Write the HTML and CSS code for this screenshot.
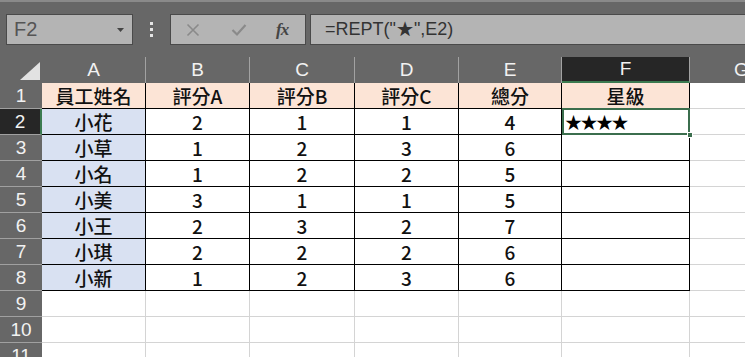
FILE: index.html
```html
<!DOCTYPE html>
<html lang="zh-Hant">
<head>
<meta charset="utf-8">
<title>Excel REPT</title>
<link rel="stylesheet" href="styles.css">
</head>
<body>
<div class="toolbar">
  <div class="namebox">
    <span class="nb-text">F2</span>
    <svg class="nb-arrow" width="7" height="4" viewBox="0 0 7 4"><polygon points="0,0 7,0 3.5,4" fill="#444"/></svg>
  </div>
  <div class="dots"><span></span><span></span><span></span></div>
  <div class="fbtns">
    <svg class="ico" width="14" height="14" viewBox="0 0 14 14"><path d="M1.5 1.5 L12.5 12.5 M12.5 1.5 L1.5 12.5" stroke="#8a8a8a" stroke-width="1.6" fill="none"/></svg>
    <svg class="ico" width="16" height="14" viewBox="0 0 16 14"><path d="M1.5 7 L6 11.5 L14.5 2" stroke="#8a8a8a" stroke-width="2.2" fill="none"/></svg>
    <span class="fx">fx</span>
  </div>
  <div class="finput">=REPT("★",E2)</div>
</div>
<div class="sheet">
  <div class="corner"><svg width="20" height="18" viewBox="0 0 20 18"><polygon points="0,18 20,0 20,18" fill="#e2e2e2"/></svg></div>
  <div class="ch">A</div><div class="ch">B</div><div class="ch">C</div><div class="ch">D</div><div class="ch">E</div><div class="ch ch-sel">F</div><div class="ch ch-last">G</div>

  <div class="rh">1</div>
  <div class="c t hd">員工姓名</div><div class="c t hd">評分A</div><div class="c t hd">評分B</div><div class="c t hd">評分C</div><div class="c t hd">總分</div><div class="c t hd">星級</div><div class="c"></div>

  <div class="rh rh-sel">2</div>
  <div class="c t nm">小花</div><div class="c t">2</div><div class="c t">1</div><div class="c t">1</div><div class="c t">4</div><div class="c t stars sel">★★★★<span class="handle"></span></div><div class="c"></div>

  <div class="rh">3</div>
  <div class="c t nm">小草</div><div class="c t">1</div><div class="c t">2</div><div class="c t">3</div><div class="c t">6</div><div class="c t"></div><div class="c"></div>

  <div class="rh">4</div>
  <div class="c t nm">小名</div><div class="c t">1</div><div class="c t">2</div><div class="c t">2</div><div class="c t">5</div><div class="c t"></div><div class="c"></div>

  <div class="rh">5</div>
  <div class="c t nm">小美</div><div class="c t">3</div><div class="c t">1</div><div class="c t">1</div><div class="c t">5</div><div class="c t"></div><div class="c"></div>

  <div class="rh">6</div>
  <div class="c t nm">小王</div><div class="c t">2</div><div class="c t">3</div><div class="c t">2</div><div class="c t">7</div><div class="c t"></div><div class="c"></div>

  <div class="rh">7</div>
  <div class="c t nm">小琪</div><div class="c t">2</div><div class="c t">2</div><div class="c t">2</div><div class="c t">6</div><div class="c t"></div><div class="c"></div>

  <div class="rh">8</div>
  <div class="c t nm">小新</div><div class="c t">1</div><div class="c t">2</div><div class="c t">3</div><div class="c t">6</div><div class="c t"></div><div class="c"></div>

  <div class="rh">9</div>
  <div class="c"></div><div class="c"></div><div class="c"></div><div class="c"></div><div class="c"></div><div class="c"></div><div class="c"></div>

  <div class="rh">10</div>
  <div class="c"></div><div class="c"></div><div class="c"></div><div class="c"></div><div class="c"></div><div class="c"></div><div class="c"></div>

  <div class="rh">11</div>
  <div class="c"></div><div class="c"></div><div class="c"></div><div class="c"></div><div class="c"></div><div class="c"></div><div class="c"></div>
</div>
</body>
</html>
```
FILE: styles.css
```css
* { box-sizing: border-box; }
html, body {
  margin: 0;
  padding: 0;
  width: 745px;
  height: 357px;
  overflow: hidden;
  background: #676767;
  font-family: "Liberation Sans", Arial, sans-serif;
}
.toolbar {
  height: 57px;
  border-top: 2px solid #8a8a8a;
  padding: 12px 0 0 6px;
  display: flex;
  align-items: flex-start;
}
.namebox {
  width: 127px;
  height: 31px;
  background: #b4b4b4;
  border: 1px solid #4a4a4a;
  display: flex;
  align-items: center;
  justify-content: space-between;
  padding: 0 8px 0 7px;
}
.nb-text {
  font-size: 20px;
  color: #555;
}
.nb-arrow { margin-top: 1px; }
.dots {
  width: 37px;
  height: 31px;
  display: flex;
  flex-direction: column;
  align-items: center;
  justify-content: center;
  gap: 3px;
}
.dots span {
  width: 3px;
  height: 3px;
  background: #e4e4e4;
}
.fbtns {
  width: 136px;
  height: 31px;
  background: #b4b4b4;
  border: 1px solid #4a4a4a;
  display: flex;
  align-items: center;
  padding-left: 15px;
}
.fbtns .ico:nth-child(1) { margin-right: 31px; }
.fbtns .ico:nth-child(2) { margin-right: 29px; }
.fx {
  font-family: "Liberation Serif", "Times New Roman", serif;
  font-style: italic;
  font-weight: bold;
  font-size: 17px;
  color: #444;
  letter-spacing: -1px;
}
.finput {
  flex: 1;
  margin-left: 4px;
  height: 31px;
  background: #b4b4b4;
  border: 1px solid #4a4a4a;
  border-right: none;
  font-size: 18px;
  color: #333;
  padding-left: 14px;
  line-height: 29px;
}
.sheet {
  display: grid;
  grid-template-columns: 42px 104px 104px 105px 104px 103px 128px 1fr;
  grid-auto-rows: 26px;
  background: #fff;
}
.corner {
  background: #676767;
  display: flex;
  align-items: flex-end;
  justify-content: flex-end;
  padding: 0 2px 3px 0;
}
.ch {
  background: #676767;
  color: #f2f2f2;
  font-size: 19px;
  display: flex;
  align-items: center;
  justify-content: center;
  border-right: 1px solid #a2a2a2;
}
.ch-sel {
  background: #262626;
  border-bottom: 2px solid #3b7a50;
}
.ch-last {
  justify-content: flex-start;
  padding-left: 44px;
  border-right: none;
}
.rh {
  background: #676767;
  color: #f2f2f2;
  font-size: 19px;
  display: flex;
  align-items: center;
  justify-content: center;
  border-bottom: 1px solid #a0a0a0;
}
.rh-sel {
  background: #262626;
  border-right: 2px solid #3b7a50;
}
.c {
  border-right: 1px solid #d4d4d4;
  border-bottom: 1px solid #d4d4d4;
  background: #fff;
  font-family: "Noto Sans CJK TC", "Noto Sans CJK SC", sans-serif;
  font-size: 19px;
  font-weight: 500;
  color: #111;
  display: flex;
  align-items: center;
  justify-content: center;
  position: relative;
}
.c.t {
  border-right-color: #000;
  border-bottom-color: #000;
}
.hd { background: #fce4d6; }
.nm { background: #d9e1f2; }
.stars {
  justify-content: flex-start;
  padding-left: 3px;
  font-family: "Noto Sans CJK TC", sans-serif;
  font-size: 17px;
  letter-spacing: -1.5px;
  font-weight: normal;
  color: #000;
}
.sel::after {
  content: "";
  position: absolute;
  left: 0;
  top: -1px;
  right: -1px;
  bottom: -1px;
  border: 2px solid #3b6e4d;
}
.handle {
  position: absolute;
  right: -4px;
  bottom: -4px;
  width: 6px;
  height: 6px;
  background: #3b6e4d;
  border: 1px solid #fff;
  z-index: 2;
}
```
